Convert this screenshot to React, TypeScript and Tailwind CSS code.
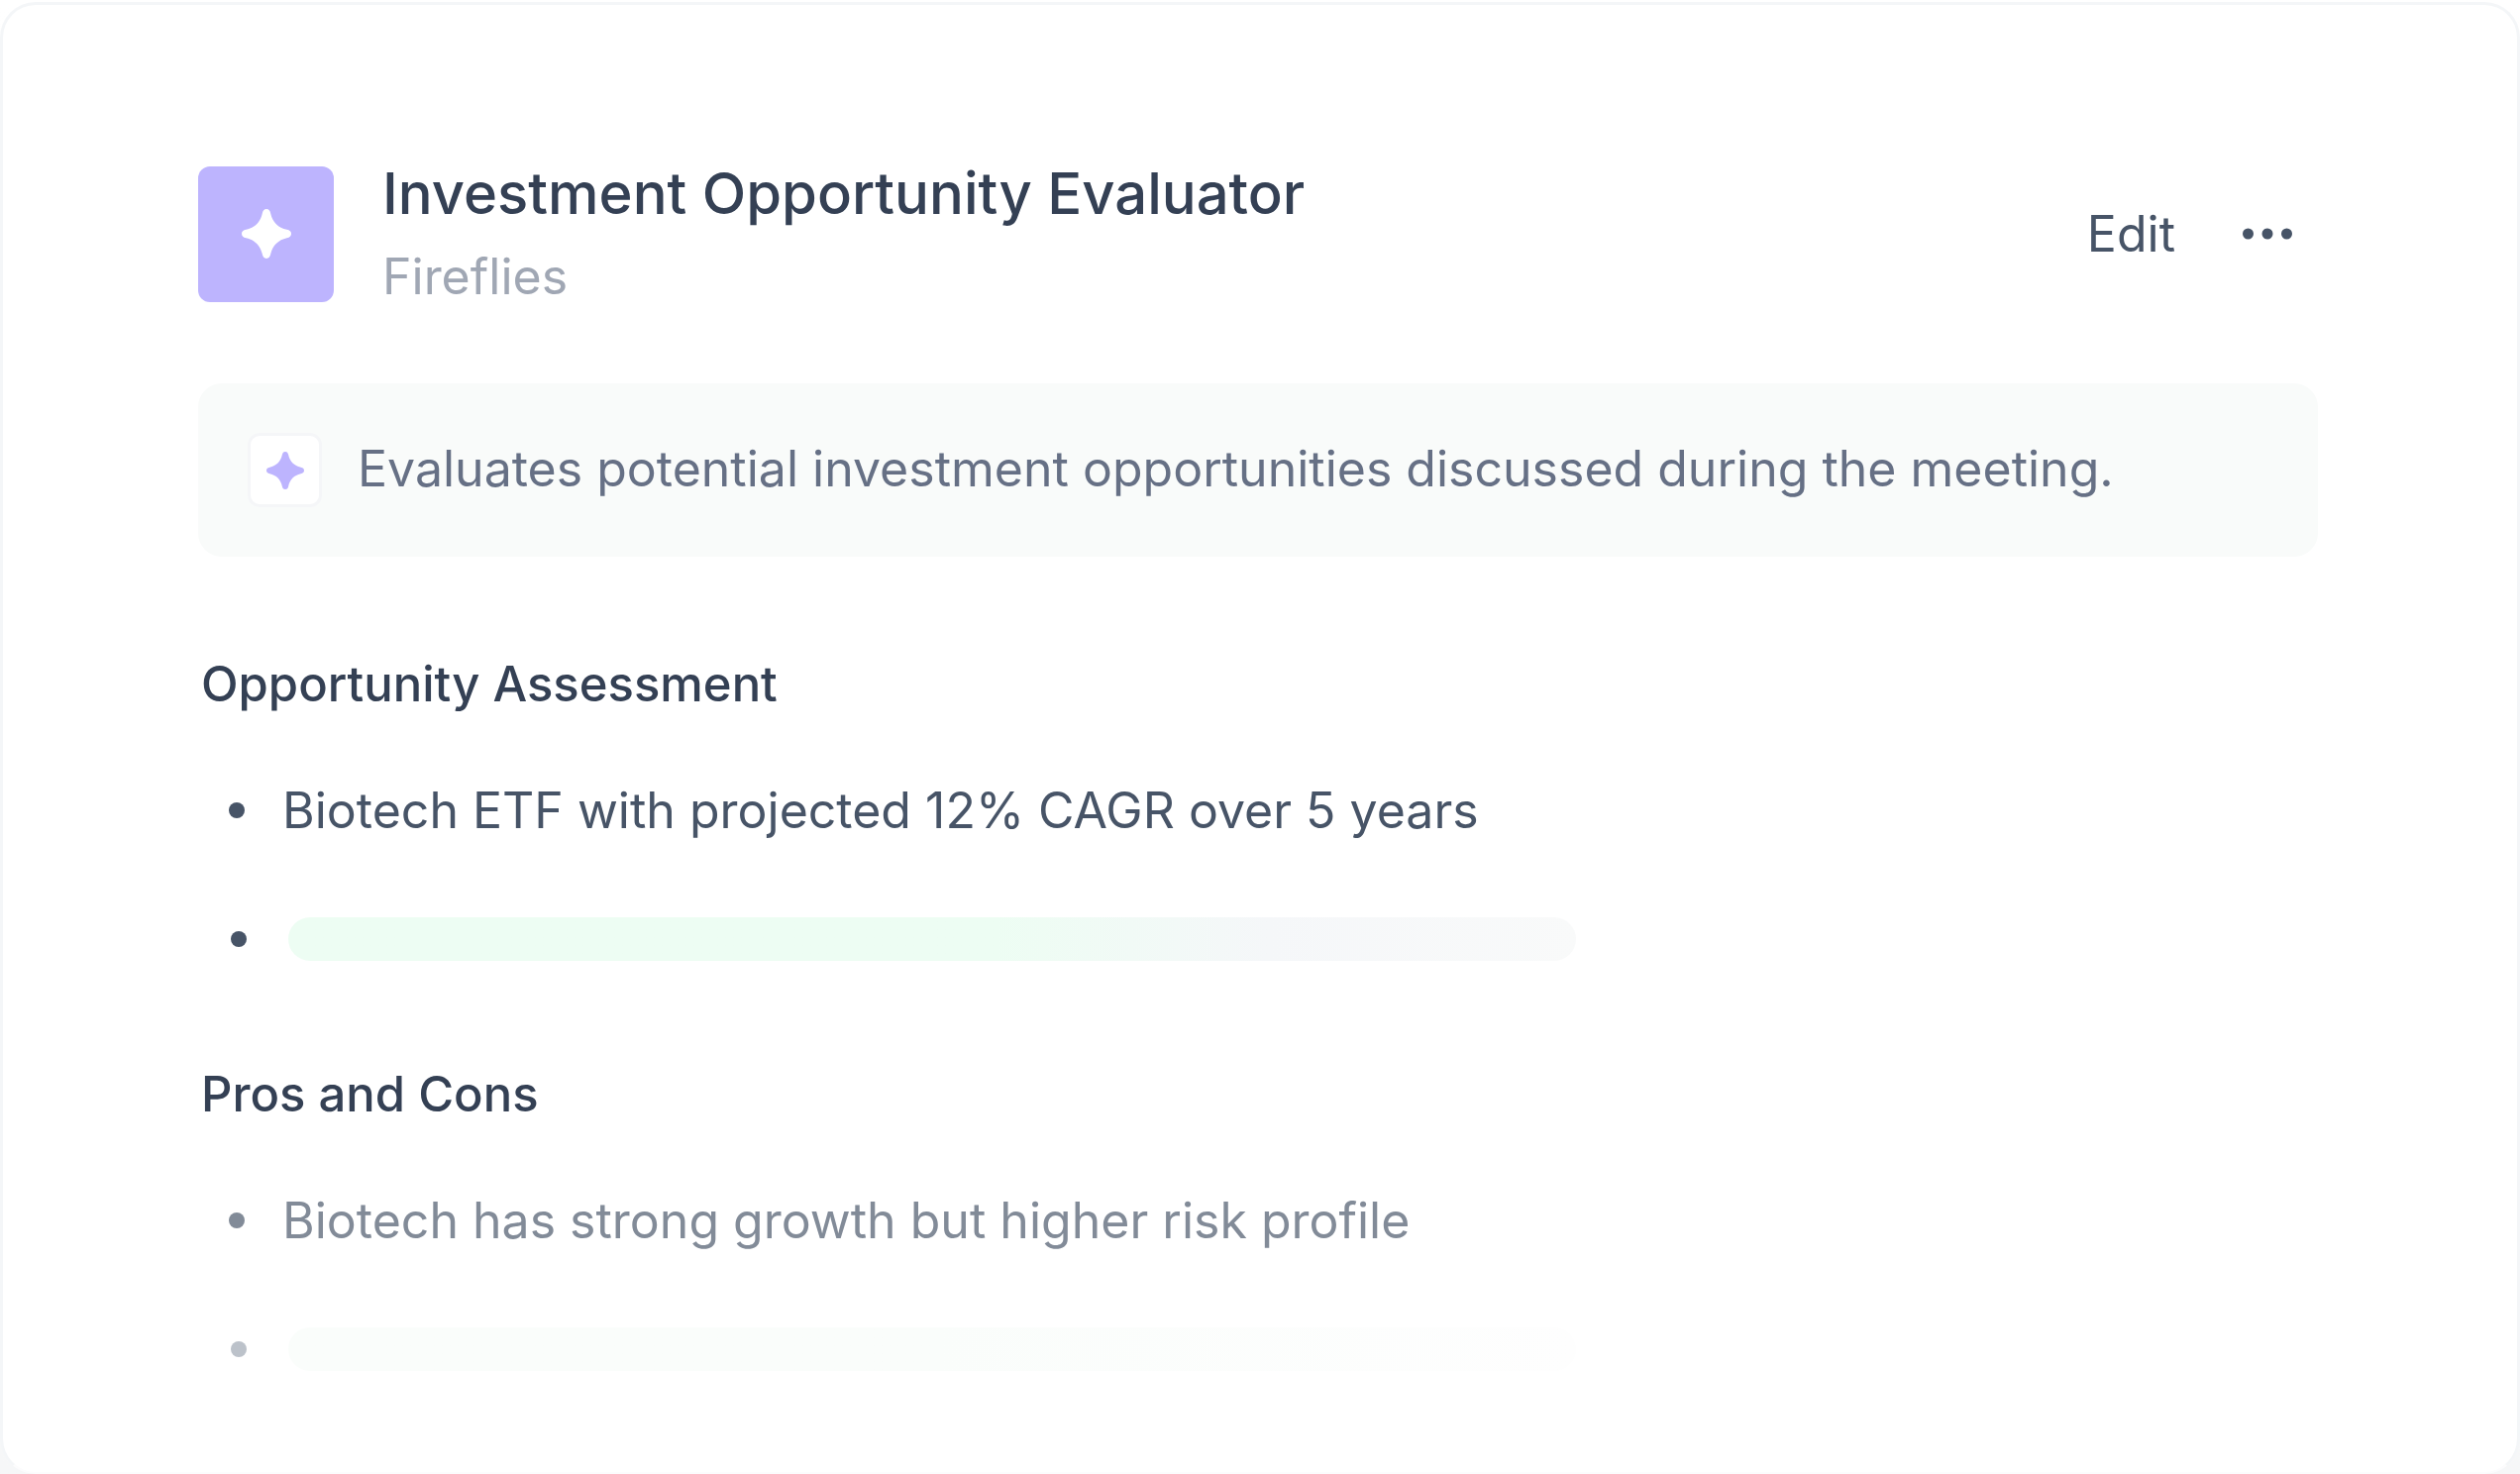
import React from 'react';

interface Section {
  title: string;
  item: string;
  itemClass: string;
  dotClass: string;
  barDotClass: string;
  barClass: string;
}

const SECTIONS: Section[] = [
  {
    title: 'Opportunity Assessment',
    item: 'Biotech ETF with projected 12% CAGR over 5 years',
    itemClass: 'text-[#475467]',
    dotClass: 'bg-[#475467]',
    barDotClass: 'bg-[#475467]',
    barClass: 'bg-linear-to-r from-[#edfdf3] from-55% via-[#f5f7f9] via-76% to-[#f9fafa]',
  },
  {
    title: 'Pros and Cons',
    item: 'Biotech has strong growth but higher risk profile',
    itemClass: 'text-[#828b98]',
    dotClass: 'bg-[#828b98]',
    barDotClass: 'bg-[#bcc2ca]',
    barClass: 'bg-linear-to-r from-[#fafdfb] from-50% to-[#fefefe]',
  },
];

const Spark: React.FC<{ className: string }> = ({ className }) => (
  <svg viewBox="0 0 50 50" fill="currentColor" className={className} aria-hidden="true">
    <path d="M25 0C27.4 0 28.6 1.6 29.2 4.4C31.2 13.2 36.8 18.8 45.6 20.8C48.4 21.4 50 22.6 50 25C50 27.4 48.4 28.6 45.6 29.2C36.8 31.2 31.2 36.8 29.2 45.6C28.6 48.4 27.4 50 25 50C22.6 50 21.4 48.4 20.8 45.6C18.8 36.8 13.2 31.2 4.4 29.2C1.6 28.6 0 27.4 0 25C0 22.6 1.6 21.4 4.4 20.8C13.2 18.8 18.8 13.2 20.8 4.4C21.4 1.6 22.6 0 25 0Z" />
  </svg>
);

const App: React.FC = () => {
  return (
    <div className="flex min-h-screen flex-col bg-linear-to-b from-white to-[#f6f7f8] pt-0.5 font-[Inter,sans-serif]">
      <main className="grow rounded-[36px] border-3 border-b-2 border-[#f4f6f8] border-b-[#fcfcfd] bg-white pt-[154px] pr-[201px] pl-[197px]">
        {/* Header */}
        <header className="flex items-center justify-between">
          <div className="flex items-center gap-[49px]">
            <div className="flex size-[137px] items-center justify-center rounded-xl bg-[#bdb4fe]">
              <Spark className="size-[50px] text-white" />
            </div>
            <div className="flex flex-col gap-[18px] pb-1">
              <h1 className="text-[58px] leading-[72px] font-medium text-[#344054]">
                Investment Opportunity Evaluator
              </h1>
              <p className="text-[50px] leading-[60px] text-[#a0a7b4]">Fireflies</p>
            </div>
          </div>
          <div className="flex items-center gap-16 pr-[22px] text-[#475467]">
            <button type="button" className="text-[50px] leading-[60px]">Edit</button>
            <button type="button" aria-label="More options" className="p-1">
              <svg viewBox="0 0 50 12" fill="currentColor" className="h-3 w-[50px]" aria-hidden="true">
                <circle cx="5.5" cy="6" r="5.5" />
                <circle cx="25" cy="6" r="5.5" />
                <circle cx="44.5" cy="6" r="5.5" />
              </svg>
            </button>
          </div>
        </header>

        {/* Summary banner */}
        <div className="mt-[74px] flex h-[175px] items-center gap-9 rounded-3xl bg-[#f9fbfa] pl-[50px]">
          <div className="flex size-[75px] items-center justify-center rounded-xl border-3 border-[#f5f6f8] bg-white">
            <Spark className="size-[38px] text-[#bdb4fe]" />
          </div>
          <p className="pb-1 text-[50px] leading-[60px] text-[#667085]">
            Evaluates potential investment opportunities discussed during the meeting.
          </p>
        </div>

        {/* Sections */}
        <div className="mt-[99px] flex flex-col gap-[105px]">
          {SECTIONS.map((section) => (
            <section key={section.title}>
              <h2 className="pl-[3px] text-[49px] leading-[60px] font-medium text-[#344054]">
                {section.title}
              </h2>
              <ul className="mt-[67px]">
                <li className={`flex items-center gap-[38px] pl-[31px] text-[50px] leading-[60px] ${section.itemClass}`}>
                  <span className={`size-4 rounded-full ${section.dotClass}`} />
                  {section.item}
                </li>
                <li className="mt-[78px] flex items-center gap-[42px] pl-[33px]">
                  <span className={`size-4 shrink-0 rounded-full ${section.barDotClass}`} />
                  <span className={`h-11 w-[1300px] rounded-full ${section.barClass}`} />
                </li>
              </ul>
            </section>
          ))}
        </div>
      </main>
    </div>
  );
};

export default App;
